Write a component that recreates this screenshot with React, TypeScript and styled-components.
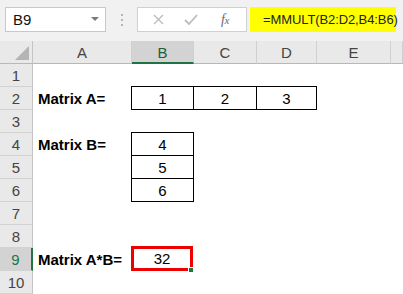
import React from "react";
import styled, { createGlobalStyle } from "styled-components";

const Global = createGlobalStyle`
  html, body { margin: 0; padding: 0; background: #ffffff; }
  body { font-family: "Liberation Sans", Arial, sans-serif; overflow: hidden; }
  * { box-sizing: border-box; }
`;

const Page = styled.div`
  width: 403px;
  height: 294px;
  display: flex;
  flex-direction: column;
  background: #ffffff;
  overflow: hidden;
`;

const Toolbar = styled.div`
  height: 42px;
  background: #f1f1f1;
  display: flex;
  align-items: flex-start;
  padding: 7px 0 0 5px;
`;

const NameBox = styled.div`
  width: 101px;
  height: 25px;
  background: #fff;
  border: 1px solid #c8c8c8;
  display: flex;
  align-items: center;
  justify-content: space-between;
  padding: 0 6px 0 7px;
  font-size: 15px;
  color: #111;
`;

const Caret = styled.div`
  width: 0;
  height: 0;
  border-left: 4px solid transparent;
  border-right: 4px solid transparent;
  border-top: 4px solid #7a7a7a;
  margin-top: -2px;
`;

const Dots = styled.div`
  width: 31px;
  height: 25px;
  display: flex;
  flex-direction: column;
  align-items: center;
  justify-content: center;
  gap: 3px;
  span {
    width: 2px;
    height: 2px;
    background: #b5b5b5;
  }
`;

const FxBox = styled.div`
  width: 110px;
  height: 25px;
  background: #fff;
  border: 1px solid #d0d0d0;
  display: flex;
  align-items: center;
  padding-left: 13px;
`;

const IconSlot = styled.div<{ $w: number; $gap?: number }>`
  width: ${(p) => p.$w}px;
  height: 23px;
  margin-left: ${(p) => p.$gap ?? 0}px;
  display: flex;
  align-items: center;
  justify-content: center;
  flex: none;
`;

const Fx = styled.span`
  font-family: "Liberation Serif", "Times New Roman", serif;
  font-style: italic;
  font-size: 14px;
  color: #6a6a6a;
  letter-spacing: -0.5px;
  span { font-size: 11px; }
`;

const Formula = styled.div`
  margin-left: 3px;
  width: 146px;
  height: 25px;
  background: #ffff00;
  display: flex;
  align-items: center;
  padding-left: 13px;
  font-size: 13px;
  letter-spacing: -0.1px;
  color: #222;
  white-space: nowrap;
`;

const Sheet = styled.div`
  display: grid;
  grid-template-columns: 33px 99px 62px 63px 60px 74px 1fr;
  grid-template-rows: 23px repeat(10, 23px);
`;

const Corner = styled.div`
  background: #e9e9e9;
  border-right: 1px solid #c4c4c4;
  border-bottom: 1px solid #b8b8b8;
  position: relative;
  &::after {
    content: "";
    position: absolute;
    right: 3px;
    bottom: 3px;
    width: 0;
    height: 0;
    border-left: 14px solid transparent;
    border-bottom: 14px solid #b4b4b4;
  }
`;

const ColHead = styled.div<{ $active?: boolean }>`
  background: ${(p) => (p.$active ? "#d3d3d3" : "#e9e9e9")};
  border-right: 1px solid #d0d0d0;
  border-bottom: ${(p) => (p.$active ? "2px solid #217346" : "1px solid #b8b8b8")};
  display: flex;
  align-items: center;
  justify-content: center;
  font-size: 15px;
  color: ${(p) => (p.$active ? "#1c5e3a" : "#444")};
  padding-top: ${(p) => (p.$active ? "1px" : "0")};
`;

const RowHead = styled.div<{ $active?: boolean }>`
  background: ${(p) => (p.$active ? "#d3d3d3" : "#e9e9e9")};
  border-right: ${(p) => (p.$active ? "2px solid #217346" : "1px solid #c4c4c4")};
  border-bottom: 1px solid #d2d2d2;
  display: flex;
  align-items: center;
  justify-content: center;
  font-size: 15px;
  color: ${(p) => (p.$active ? "#217346" : "#444")};
`;

type Edge = { t?: boolean; r?: boolean; b?: boolean; l?: boolean };

const Cell = styled.div<{ $edge?: Edge; $center?: boolean; $bold?: boolean }>`
  position: relative;
  display: flex;
  align-items: center;
  justify-content: ${(p) => (p.$center ? "center" : "flex-start")};
  padding-left: ${(p) => (p.$center ? "0" : "5px")};
  font-size: 15px;
  font-weight: ${(p) => (p.$bold ? 700 : 400)};
  color: #000;
  white-space: nowrap;
  border-top: ${(p) => (p.$edge?.t ? "1px solid #000" : "none")};
  border-right: ${(p) => (p.$edge?.r ? "1px solid #000" : "none")};
  border-bottom: ${(p) => (p.$edge?.b ? "1px solid #000" : "none")};
  border-left: ${(p) => (p.$edge?.l ? "1px solid #000" : "none")};
  margin-top: ${(p) => (p.$edge?.t ? "-1px" : "0")};
  margin-left: ${(p) => (p.$edge?.l ? "-1px" : "0")};
`;

const Selected = styled(Cell)`
  border: 3px solid #ee0000;
  margin: -2px 1px 0 -1px;
  &::after {
    content: "";
    position: absolute;
    right: -3px;
    bottom: -4px;
    width: 4px;
    height: 4px;
    background: #217346;
    border-left: 1px solid #fff;
    border-top: 1px solid #fff;
  }
`;

const cols = ["A", "B", "C", "D", "E", ""];

function Blank() {
  return <Cell />;
}

export default function App() {
  const rows: React.ReactNode[] = [];
  for (let r = 1; r <= 10; r++) {
    rows.push(
      <RowHead key={`h${r}`} $active={r === 9}>
        {r}
      </RowHead>
    );
    const cells: React.ReactNode[] = [];
    if (r === 2) {
      cells.push(<Cell key="a" $bold>Matrix A=</Cell>);
      cells.push(<Cell key="b" $center $edge={{ t: true, r: true, b: true, l: true }}>1</Cell>);
      cells.push(<Cell key="c" $center $edge={{ t: true, r: true, b: true }}>2</Cell>);
      cells.push(<Cell key="d" $center $edge={{ t: true, r: true, b: true }}>3</Cell>);
      cells.push(<Blank key="e" />);
      cells.push(<Blank key="f" />);
    } else if (r === 4 || r === 5 || r === 6) {
      cells.push(
        <Cell key="a" $bold>
          {r === 4 ? "Matrix B=" : ""}
        </Cell>
      );
      cells.push(
        <Cell key="b" $center $edge={{ t: r === 4, r: true, b: true, l: true }}>
          {r}
        </Cell>
      );
      cells.push(<Blank key="c" />, <Blank key="d" />, <Blank key="e" />, <Blank key="f" />);
    } else if (r === 9) {
      cells.push(<Cell key="a" $bold>Matrix A*B=</Cell>);
      cells.push(<Selected key="b" $center>32</Selected>);
      cells.push(<Blank key="c" />, <Blank key="d" />, <Blank key="e" />, <Blank key="f" />);
    } else {
      for (let i = 0; i < 6; i++) cells.push(<Blank key={i} />);
    }
    rows.push(...cells);
  }

  return (
    <Page>
      <Global />
      <Toolbar>
        <NameBox>
          <span>B9</span>
          <Caret />
        </NameBox>
        <Dots>
          <span />
          <span />
          <span />
        </Dots>
        <FxBox>
          <IconSlot $w={14}>
            <svg width="11" height="11" viewBox="0 0 11 11">
              <path d="M1 1 L10 10 M10 1 L1 10" stroke="#bcbcbc" strokeWidth="1.4" fill="none" />
            </svg>
          </IconSlot>
          <IconSlot $w={24} $gap={14}>
            <svg width="14" height="11" viewBox="0 0 14 11">
              <path d="M1 6 L5 10 L13 1" stroke="#bcbcbc" strokeWidth="1.8" fill="none" />
            </svg>
          </IconSlot>
          <IconSlot $w={20} $gap={12}>
            <Fx>
              f<span>x</span>
            </Fx>
          </IconSlot>
        </FxBox>
        <Formula>=MMULT(B2:D2,B4:B6)</Formula>
      </Toolbar>
      <Sheet>
        <Corner />
        {cols.map((c, i) => (
          <ColHead key={i} $active={c === "B"}>
            {c}
          </ColHead>
        ))}
        {rows}
      </Sheet>
    </Page>
  );
}
